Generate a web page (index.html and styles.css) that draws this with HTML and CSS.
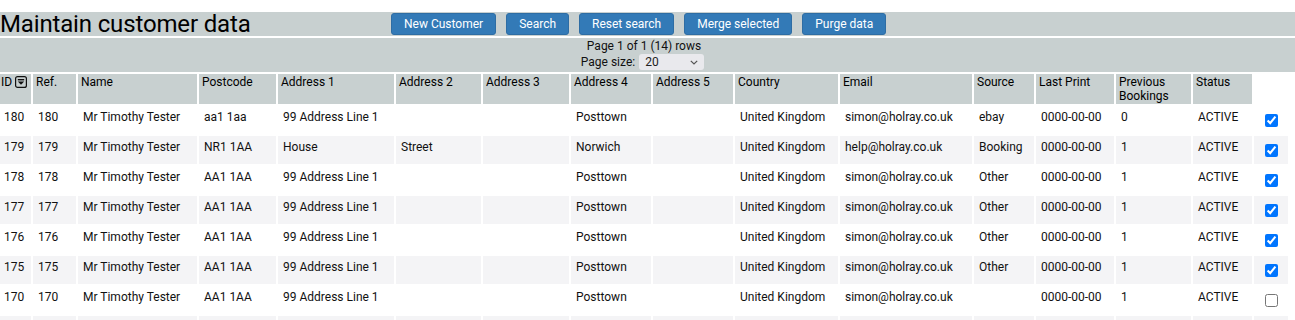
FILE: index.html
```html
<!DOCTYPE html>
<html>
<head>
<meta charset="utf-8">
<title>Maintain customer data</title>
<link rel="stylesheet" href="styles.css">
</head>
<body>
<div class="page">
  <div class="titlebar">
    <h1 class="title">Maintain customer data</h1>
    <div class="actions">
      <button class="btn">New Customer</button>
      <button class="btn">Search</button>
      <button class="btn">Reset search</button>
      <button class="btn">Merge selected</button>
      <button class="btn">Purge data</button>
    </div>
  </div>
  <div class="pager">
    <div class="pager-line">Page 1 of 1 (14) rows</div>
    <div class="pager-line size-line">
      <span>Page size:</span>
      <span class="select-wrap">
        <select class="select"><option>20</option><option>50</option><option>100</option></select>
        <svg class="chev" width="8" height="5" viewBox="0 0 8 5"><path d="M0.8 0.8 L4 4 L7.2 0.8" fill="none" stroke="#555" stroke-width="1.2"/></svg>
      </span>
    </div>
  </div>
  <table class="grid">
    <thead>
      <tr>
        <th class="c-id">ID <svg class="sort" width="12" height="12" viewBox="0 0 12 12"><rect x="0.6" y="0.6" width="10.8" height="10.8" rx="2" fill="none" stroke="#111" stroke-width="1.2"/><rect x="2.8" y="3" width="6.4" height="1.4" fill="#111"/><polygon points="2.8,5.4 9.2,5.4 6,8.8" fill="#111"/></svg></th>
        <th class="c-ref">Ref.</th>
        <th class="c-name">Name</th>
        <th class="c-pc">Postcode</th>
        <th class="c-a1">Address 1</th>
        <th class="c-a2">Address 2</th>
        <th class="c-a3">Address 3</th>
        <th class="c-a4">Address 4</th>
        <th class="c-a5">Address 5</th>
        <th class="c-country">Country</th>
        <th class="c-email">Email</th>
        <th class="c-src">Source</th>
        <th class="c-print">Last Print</th>
        <th class="c-prev">Previous Bookings</th>
        <th class="c-status">Status</th>
        <th class="c-check"></th>
      </tr>
    </thead>
    <tbody>
      <tr><td>180</td><td>180</td><td>Mr Timothy Tester</td><td>aa1 1aa</td><td>99 Address Line 1</td><td></td><td></td><td>Posttown</td><td></td><td>United Kingdom</td><td>simon@holray.co.uk</td><td>ebay</td><td>0000-00-00</td><td>0</td><td>ACTIVE</td><td class="chk"><input type="checkbox" checked></td></tr>
      <tr><td>179</td><td>179</td><td>Mr Timothy Tester</td><td>NR1 1AA</td><td>House</td><td>Street</td><td></td><td>Norwich</td><td></td><td>United Kingdom</td><td>help@holray.co.uk</td><td>Booking</td><td>0000-00-00</td><td>1</td><td>ACTIVE</td><td class="chk"><input type="checkbox" checked></td></tr>
      <tr><td>178</td><td>178</td><td>Mr Timothy Tester</td><td>AA1 1AA</td><td>99 Address Line 1</td><td></td><td></td><td>Posttown</td><td></td><td>United Kingdom</td><td>simon@holray.co.uk</td><td>Other</td><td>0000-00-00</td><td>1</td><td>ACTIVE</td><td class="chk"><input type="checkbox" checked></td></tr>
      <tr><td>177</td><td>177</td><td>Mr Timothy Tester</td><td>AA1 1AA</td><td>99 Address Line 1</td><td></td><td></td><td>Posttown</td><td></td><td>United Kingdom</td><td>simon@holray.co.uk</td><td>Other</td><td>0000-00-00</td><td>1</td><td>ACTIVE</td><td class="chk"><input type="checkbox" checked></td></tr>
      <tr><td>176</td><td>176</td><td>Mr Timothy Tester</td><td>AA1 1AA</td><td>99 Address Line 1</td><td></td><td></td><td>Posttown</td><td></td><td>United Kingdom</td><td>simon@holray.co.uk</td><td>Other</td><td>0000-00-00</td><td>1</td><td>ACTIVE</td><td class="chk"><input type="checkbox" checked></td></tr>
      <tr><td>175</td><td>175</td><td>Mr Timothy Tester</td><td>AA1 1AA</td><td>99 Address Line 1</td><td></td><td></td><td>Posttown</td><td></td><td>United Kingdom</td><td>simon@holray.co.uk</td><td>Other</td><td>0000-00-00</td><td>1</td><td>ACTIVE</td><td class="chk"><input type="checkbox" checked></td></tr>
      <tr><td>170</td><td>170</td><td>Mr Timothy Tester</td><td>AA1 1AA</td><td>99 Address Line 1</td><td></td><td></td><td>Posttown</td><td></td><td>United Kingdom</td><td>simon@holray.co.uk</td><td></td><td>0000-00-00</td><td>1</td><td>ACTIVE</td><td class="chk"><input type="checkbox"></td></tr>
      <tr><td>169</td><td>169</td><td>Mr Timothy Tester</td><td>AA1 1AA</td><td>99 Address Line 1</td><td></td><td></td><td>Posttown</td><td></td><td>United Kingdom</td><td>simon@holray.co.uk</td><td></td><td>0000-00-00</td><td>1</td><td>ACTIVE</td><td class="chk"><input type="checkbox"></td></tr>
      <tr><td>168</td><td>168</td><td>Mr Timothy Tester</td><td>AA1 1AA</td><td>99 Address Line 1</td><td></td><td></td><td>Posttown</td><td></td><td>United Kingdom</td><td>simon@holray.co.uk</td><td></td><td>0000-00-00</td><td>1</td><td>ACTIVE</td><td class="chk"><input type="checkbox"></td></tr>
    </tbody>
  </table>
</div>
</body>
</html>
```

FILE: styles.css
```css
html, body {
  margin: 0;
  padding: 0;
  background: #ffffff;
}

body {
  font-family: Roboto, "Liberation Sans", Arial, sans-serif;
  font-size: 12px;
  color: #111;
}

.page {
  padding-top: 12px;
}

.titlebar {
  display: flex;
  align-items: center;
  height: 24px;
  background: #c8d0d0;
}

.title {
  margin: 0;
  width: 391px;
  font-size: 24px;
  font-weight: 400;
  line-height: 24px;
  letter-spacing: -0.15px;
  color: #000;
  white-space: nowrap;
}

.actions {
  display: flex;
  gap: 10px;
}

.btn {
  height: 22px;
  padding: 0 12px;
  border: 1px solid #2e6da4;
  border-radius: 3px;
  background: #337ab7;
  color: #fff;
  font-family: Roboto, "Liberation Sans", Arial, sans-serif;
  font-size: 12px;
  line-height: 20px;
}

.pager {
  margin-top: 2px;
  padding: 1px 7px 2px 0;
  background: #c8d0d0;
  text-align: center;
  color: #111;
}

.pager-line {
  line-height: 14px;
}

.size-line {
  display: flex;
  justify-content: center;
  align-items: center;
  gap: 4px;
  height: 17px;
  margin-left: -3px;
}

.select-wrap {
  position: relative;
  display: inline-block;
  height: 16px;
}

.select {
  appearance: none;
  -webkit-appearance: none;
  width: 65px;
  height: 16px;
  margin: 0;
  padding: 0 0 0 6px;
  border: none;
  border-radius: 3px;
  background: #e9e9ed;
  font-family: Roboto, "Liberation Sans", Arial, sans-serif;
  font-size: 12px;
  color: #222;
  text-align: left;
}

.chev {
  position: absolute;
  right: 6px;
  top: 6px;
  pointer-events: none;
}

.grid {
  margin-left: -2px;
  margin-top: 0;
  border-collapse: separate;
  border-spacing: 2px;
  table-layout: fixed;
  width: 1292px;
}

.grid th {
  box-sizing: border-box;
  height: 30px;
  padding: 1px 2px 1px 3px;
  background: #c8d0d0;
  font-weight: 400;
  text-align: left;
  vertical-align: top;
  line-height: 14px;
  color: #000;
}

.grid th.c-id {
  padding-left: 1px;
}

.grid th.c-check {
  background: transparent;
}

.sort {
  vertical-align: -2px;
}

.c-id { width: 31px; }
.c-ref { width: 43px; }
.c-name { width: 119px; }
.c-pc { width: 77px; }
.c-a1 { width: 116px; }
.c-a2 { width: 85px; }
.c-a3 { width: 86px; }
.c-a4 { width: 80px; }
.c-a5 { width: 80px; }
.c-country { width: 103px; }
.c-email { width: 132px; }
.c-src { width: 60px; }
.c-print { width: 78px; }
.c-prev { width: 75px; }
.c-status { width: 59px; }
.c-check { width: 34px; }

.grid td {
  box-sizing: border-box;
  height: 28px;
  padding: 4px 4px 2px 5px;
  line-height: 14px;
  vertical-align: top;
  white-space: nowrap;
  overflow: hidden;
  color: #111;
}

.grid tbody td:first-child {
  padding-left: 4px;
}

.grid tbody tr:nth-child(even) td {
  background: #f4f4f6;
}

.grid td.chk {
  padding: 0;
  text-align: center;
  vertical-align: middle;
}

.chk input {
  margin: 1px 0 0 0;
  vertical-align: middle;
}
```
